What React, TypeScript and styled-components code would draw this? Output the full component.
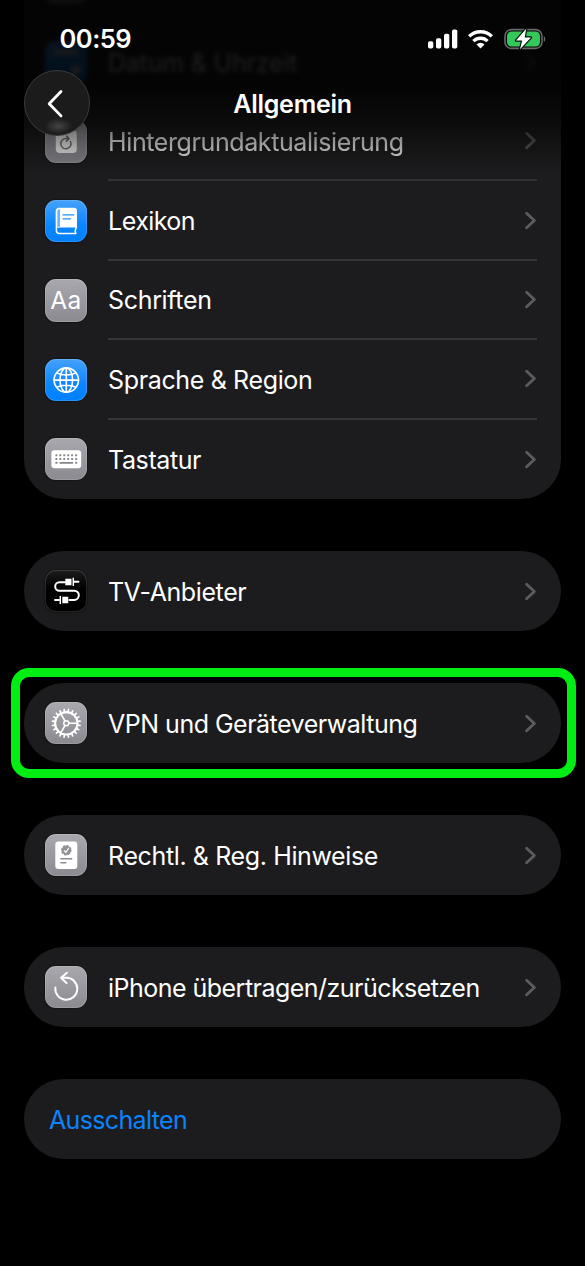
import React from "react";
import styled, { createGlobalStyle, css } from "styled-components";

const Global = createGlobalStyle`
  html, body { margin: 0; padding: 0; background: #000; }
  * { box-sizing: border-box; }
`;

const Screen = styled.main`
  position: relative;
  width: 585px;
  height: 1266px;
  overflow: hidden;
  background: #000;
  color: #fff;
  font-family: Inter, "Liberation Sans", sans-serif;
`;

const Content = styled.div`
  display: flex;
  flex-direction: column;
  justify-content: flex-end;
  gap: 52.6px;
  height: 100%;
  padding: 0 24px 107.2px;
`;

const Group = styled.section`
  position: relative;
  flex: none;
  border-radius: 39.7px;
  background: #1c1c1e;
`;

const Highlight = styled.div`
  position: absolute;
  inset: -15.5px -15px -15px -13px;
  border: 9px solid #00ee14;
  border-radius: 18px;
`;

const Row = styled.div<{ $blur?: number; $dim?: number }>`
  display: flex;
  align-items: center;
  height: 79.4px;
  padding-left: 20.7px;
  ${(p) => p.$blur && css`filter: blur(${p.$blur}px);`}
  opacity: ${(p) => p.$dim ?? 1};
`;

const Body = styled.div<{ $line?: boolean }>`
  display: flex;
  flex: 1;
  align-items: center;
  justify-content: space-between;
  height: 100%;
  margin: 0 24px 0 20.8px;
  border-bottom: ${(p) => (p.$line ? "2px solid #353538" : "0")};
`;

const Label = styled.span<{ $track?: number; $blue?: boolean }>`
  padding-top: 2px;
  font-size: 25px;
  line-height: 30px;
  white-space: nowrap;
  letter-spacing: ${(p) => p.$track ?? -0.4}px;
  color: ${(p) => (p.$blue ? "#0a84ff" : "#fff")};
`;

const PowerOff = styled.div`
  display: flex;
  align-items: center;
  height: 79.4px;
  padding-left: 25px;
`;

const tones = {
  blue: "linear-gradient(#45a2fb, #0a86ff 60%, #0080ff)",
  gray: "linear-gradient(#a9a8ae, #8b8a90)",
  black: "linear-gradient(#1c1c1c, #000 45%)",
};
type Tone = keyof typeof tones;

const Tile = styled.div<{ $tone: Tone }>`
  flex: none;
  width: 42.6px;
  height: 42.6px;
  border-radius: 11px;
  background: ${(p) => tones[p.$tone]};
  box-shadow: inset 0 0 0 1px rgba(255, 255, 255, 0.14), 0 0 1px 1px rgba(0, 0, 0, 0.3);
  svg { display: block; width: 100%; height: 100%; }
`;

const LetterTile = styled.div`
  display: flex;
  align-items: center;
  justify-content: center;
  height: 100%;
  font-size: 24.5px;
  letter-spacing: 0.5px;
`;

const Svg = ({ children }: { children: React.ReactNode }) => (
  <svg viewBox="0 0 42.6 42.6" fill="none" stroke="#fff" strokeLinecap="round" strokeLinejoin="round">
    {children}
  </svg>
);

const BookIcon = () => (
  <Svg>
    <path d="M14.2 7.8H29a3 3 0 0 1 3 3V27.6H14.5c-1 0-1.6.3-2 .8V9.2c.3-.8.9-1.4 1.7-1.4Z" fill="#fff" stroke="none" />
    <path d="M14.3 8.5c-1.9 0-2.9 1-2.9 2.9v19.2c0 2 1.2 3 3 3h16.5c-.9-1.5-.9-3.5 0-5.2l.5-1.2" strokeWidth="1.5" />
    <path d="M14 9.5v17.2" stroke="#168bff" strokeWidth="1.3" strokeLinecap="butt" />
    <path d="M18 14.8h10.8M18 18.8h7.6" stroke="#1e90ff" strokeWidth="1.3" />
  </Svg>
);

const GlobeIcon = () => (
  <Svg>
    <g strokeWidth="1.6">
      <circle cx="21.3" cy="21.1" r="12.2" />
      <ellipse cx="21.3" cy="21.1" rx="6.3" ry="12.2" />
      <path d="M21.3 9v24.3M9.1 21.1h24.4M11.8 13.9c5 2.8 14 2.8 19 0M11.8 28.3c5-2.8 14-2.8 19 0" />
    </g>
  </Svg>
);

const KeyboardIcon = () => (
  <Svg>
    <rect x="6.4" y="12.3" width="29.8" height="17.9" rx="3" fill="#fff" stroke="none" />
    <g fill="#87868c" stroke="none">
      {[17.3, 21, 24.8].map((y, r) =>
        [11.4, 15.3, 19.3, 23.2, 27.1, 31.1].map((x, c) =>
          r === 2 && c > 0 && c < 5 ? null : <rect key={`${r}${c}`} x={x - 1} y={y - 1} width="2" height="2" rx=".4" />
        )
      )}
      <rect x="14.5" y="24" width="13.6" height="1.8" rx=".5" />
    </g>
  </Svg>
);

const CableIcon = () => (
  <Svg>
    <path d="M20 12.3h-5.6a4.2 4.2 0 0 0 0 8.4h14.8a4.65 4.65 0 0 1 0 9.3H24.500M29 11.8h4.500M10 30h4" strokeWidth="2" />
    <path d="M20.3 8.7h6.2v6.5h-6.2ZM17.3 26.8h6v6.5h-6Z" fill="#fff" stroke="none" />
    <path d="M28.300 7.8v8.2M15.300 26v8" strokeWidth="1.5" strokeLinecap="butt" />
  </Svg>
);

const GearIcon = () => (
  <Svg>
    <g transform="translate(21.3 21.3)">
      <circle r="11.2" strokeWidth="2.1" />
      {Array.from({ length: 20 }, (_, i) => (
        <path key={i} d="M12 0h2" strokeWidth="1.7" transform={`rotate(${i * 18 + 9})`} />
      ))}
      <circle r="2.5" strokeWidth="1.5" />
      {[0, 120, 240].map((a) => (
        <path key={a} d="M3 0h8" strokeWidth="1.6" transform={`rotate(${a})`} />
      ))}
    </g>
  </Svg>
);

const CertificateIcon = () => (
  <Svg>
    <rect x="10.3" y="7.5" width="22" height="27.5" rx="3" fill="#fff" stroke="none" />
    <circle cx="21.3" cy="16.3" r="4.4" fill="#929197" stroke="none" />
    <circle cx="21.3" cy="16.3" r="4.5" stroke="#929197" strokeWidth="1.5" strokeDasharray="1.5 2.034" />
    <path d="m19.3 16.6 1.5 1.7 2.7-3.8" strokeWidth="1.2" />
    <path d="M15.9 24.7h10.8M15.9 28.8h5" stroke="#8b8a90" strokeWidth="1.4" />
  </Svg>
);

const ResetIcon = () => (
  <Svg>
    <path d="M10.4 21.4a11 11 0 1 0 11-9.6h-5M22 6.7l-6 5.1 5.6 5.3" strokeWidth="1.9" />
  </Svg>
);

const RefreshAppIcon = () => (
  <Svg>
    <rect x="10.8" y="10" width="21" height="23" rx="4" fill="#fff" stroke="none" />
    <path d="M25.500 20a5.100 5.100 0 1 1-4-2.900h2M21.500 14.500l2.500 2.600-2.500 2.500" transform="translate(0 1.500)" stroke="#77767b" strokeWidth="1.500" />
  </Svg>
);

const CalendarIcon = () => (
  <Svg>
    <rect x="9" y="9" width="24" height="5" rx="2" fill="#ddd" stroke="none" />
    <circle cx="31" cy="29" r="5" fill="#ddd" stroke="none" />
  </Svg>
);

const Chevron = styled.svg`
  width: 13px;
  height: 19px;
  flex: none;
`;

const Disclosure = () => (
  <Chevron viewBox="0 0 13 19" fill="none" stroke="#5b5b5f" strokeWidth="2.9" strokeLinecap="round" strokeLinejoin="round">
    <path d="M2.6 2.2 10.4 9.5 2.6 16.800" />
  </Chevron>
);

type ItemProps = {
  label: string;
  icon: React.ReactNode;
  tone?: Tone;
  track?: number;
  line?: boolean;
  blur?: number;
  dim?: number;
};

const Item = ({ label, icon, tone = "gray", track, line, blur, dim }: ItemProps) => (
  <Row $blur={blur} $dim={dim}>
    <Tile $tone={tone}>{icon}</Tile>
    <Body $line={line}>
      <Label $track={track}>{label}</Label>
      <Disclosure />
    </Body>
  </Row>
);

const Header = styled.header`
  position: absolute;
  inset: 0 0 auto;
  height: 180px;
  background: linear-gradient(rgba(0, 0, 0, 0.86) 0, rgba(0, 0, 0, 0.86) 85px, rgba(0, 0, 0, 0.62) 120px, rgba(0, 0, 0, 0.28) 148px, transparent 175px);
`;

const StatusBar = styled.div`
  display: flex;
  align-items: center;
  height: 70px;
  padding: 8px 39px 0 59.5px;
`;

const Clock = styled.time`
  flex: 1;
  margin-top: -1px;
  font-size: 25.5px;
  font-weight: 600;
  letter-spacing: -0.5px;
`;

const StatusIcons = styled.div`
  display: flex;
  align-items: center;
  gap: 10.7px;
  svg { display: block; }
`;

const NavBar = styled.nav`
  display: grid;
  grid-template-columns: 66px 1fr 66px;
  align-items: center;
  height: 66px;
  padding: 0 24px;
  width: 585px;
`;

const BackButton = styled.button`
  display: grid;
  place-items: center;
  width: 66px;
  height: 66px;
  padding: 0;
  border: 1.5px solid #3b3b3c;
  border-radius: 50%;
  background: radial-gradient(ellipse 14px 8px at 52% 86%, #444446, transparent), #1b1b1c;
`;

const Title = styled.h1`
  margin: 0;
  padding-top: 2px;
  font-size: 25px;
  font-weight: 600;
  text-align: center;
  letter-spacing: -0.25px;
`;

export default function App() {
  return (
    <>
      <Global />
      <Screen>
        <Content>
          <Group>
            <Item label="" icon={null} blur={2} dim={0.6} />
            <Item label="Datum & Uhrzeit" icon={<CalendarIcon />} tone="blue" track={-0.2} blur={2} dim={0.8} />
            <Item label="Hintergrundaktualisierung" icon={<RefreshAppIcon />} line blur={0.6} dim={0.9} />
            <Item label="Lexikon" icon={<BookIcon />} tone="blue" track={-0.55} line />
            <Item label="Schriften" icon={<LetterTile>Aa</LetterTile>} track={-0.35} line />
            <Item label="Sprache & Region" icon={<GlobeIcon />} tone="blue" track={-0.36} line />
            <Item label="Tastatur" icon={<KeyboardIcon />} />
          </Group>
          <Group>
            <Item label="TV-Anbieter" icon={<CableIcon />} tone="black" />
          </Group>
          <Group>
            <Item label="VPN und Geräteverwaltung" icon={<GearIcon />} track={-0.51} />
            <Highlight />
          </Group>
          <Group>
            <Item label="Rechtl. & Reg. Hinweise" icon={<CertificateIcon />} track={-0.38} />
          </Group>
          <Group>
            <Item label="iPhone übertragen/zurücksetzen" icon={<ResetIcon />} track={-0.53} />
          </Group>
          <Group>
            <PowerOff>
              <Label $blue $track={-0.65}>Ausschalten</Label>
            </PowerOff>
          </Group>
        </Content>
        <Header>
          <StatusBar>
            <Clock>00:59</Clock>
            <StatusIcons>
              <svg width="30" height="20" viewBox="0 0 30 20" fill="#fff">
                <rect x="0" y="12.2" width="5.3" height="7.3" rx="1.8" />
                <rect x="8" y="9.2" width="5.3" height="10.3" rx="1.8" />
                <rect x="16" y="4.8" width="5.3" height="14.7" rx="1.8" />
                <rect x="24" y=".5" width="5.3" height="19" rx="1.8" />
              </svg>
              <svg width="25" height="20" viewBox="0 0 25 20" fill="none" stroke="#fff" strokeWidth="3.4">
                <path d="M1.2 7.4a16 16 0 0 1 22.6 0" />
                <path d="M5.4 12.1a10.2 10.2 0 0 1 14.2 0" />
                <path d="M12.5 19.5l-4-4.1a5.6 5.6 0 0 1 8 0Z" fill="#fff" stroke="none" />
              </svg>
              <svg width="42" height="24" viewBox="0 0 42 24">
                <rect x="1" y="2.6" width="37" height="18.8" rx="6.5" fill="none" stroke="#69696b" strokeWidth="1.6" />
                <path d="M39.8 9.2c2 .7 2 4.9 0 5.6Z" fill="#69696b" />
                <rect x="3" y="4.5" width="33" height="15" rx="4.5" fill="#34c759" />
                <path d="M22.2 1.8 12 13.5h6.2L16 22.2 27 10.5h-6.3Z" fill="#fff" stroke="#07130a" strokeWidth="2.4" paintOrder="stroke" strokeLinejoin="round" />
              </svg>
            </StatusIcons>
          </StatusBar>
          <NavBar>
            <BackButton aria-label="Zurück">
              <svg width="20" height="30" viewBox="0 0 20 30" fill="none" stroke="#fff" strokeWidth="2.8" strokeLinecap="round" strokeLinejoin="round">
                <path d="M14 3.500 2.2 15.700l11.800 12.200" />
              </svg>
            </BackButton>
            <Title>Allgemein</Title>
          </NavBar>
        </Header>
      </Screen>
    </>
  );
}
